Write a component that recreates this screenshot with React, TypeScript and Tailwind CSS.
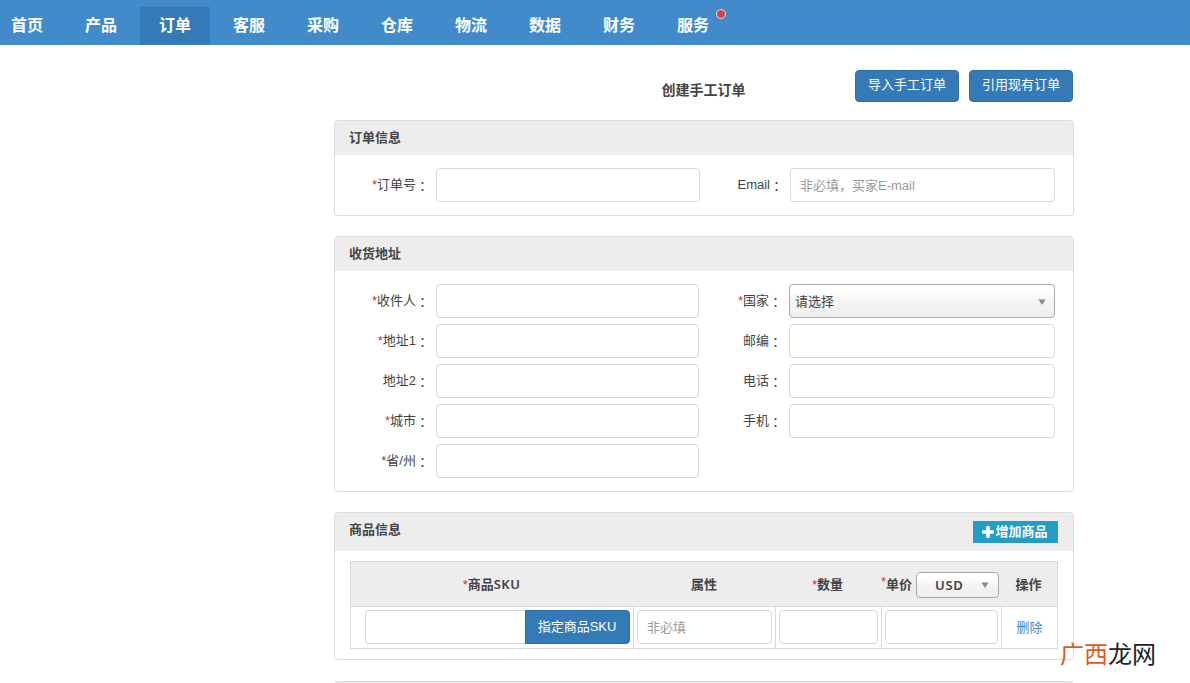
import { ReactNode } from "react";

const NAV = ["首页", "产品", "订单", "客服", "采购", "仓库", "物流", "数据", "财务", "服务"];

function Star({ className = "" }: { className?: string }) {
  return <span className={`font-['Liberation_Sans',sans-serif] font-normal text-[#c9302c] ${className}`}>*</span>;
}

function Label({ text, required = false, className = "" }: { text: string; required?: boolean; className?: string }) {
  return (
    <label className={`flex shrink-0 justify-end whitespace-nowrap pt-px ${className}`}>
      {required && <Star />}
      {text}
      <span className="pt-px font-['Noto_Sans_CJK_TC',sans-serif]">：</span>
    </label>
  );
}

function Field({ className = "", placeholder }: { className?: string; placeholder?: string }) {
  return (
    <input
      placeholder={placeholder}
      className={`h-[34px] min-w-0 rounded border border-[#d9d9d9] bg-white px-[9px] placeholder:text-[#999] ${className}`}
    />
  );
}

function Caret() {
  return (
    <svg viewBox="0 0 8 6" className="mt-px h-[6px] w-2" fill="#888">
      <path d="M0.5 0.5h7L4 6z" />
    </svg>
  );
}

function Panel({ title, action, headClass, className, children }: { title: string; action?: ReactNode; headClass: string; className: string; children: ReactNode }) {
  return (
    <section className={`overflow-hidden rounded border border-[#dcdcdc] bg-white ${className}`}>
      <header className={`flex justify-between bg-[#ededed] pl-[14px] pr-[15px] ${headClass}`}>
        <h2 className="pt-[7px] font-bold leading-5">{title}</h2>
        {action}
      </header>
      {children}
    </section>
  );
}

const LEFT = [
  { text: "收件人", required: true },
  { text: "地址1", required: true },
  { text: "地址2", required: false },
  { text: "城市", required: true },
  { text: "省/州", required: true },
];

const RIGHT = ["邮编", "电话", "手机"];

export default function App() {
  return (
    <div className="relative h-[683px] w-[1190px] overflow-hidden bg-white font-['Liberation_Sans','Noto_Sans_CJK_SC',sans-serif] text-[13px] leading-5 text-[#444]">
      <nav className="flex h-[45px] items-end gap-1 overflow-hidden bg-[#428bca]">
        {NAV.map((n, i) => (
          <a
            key={n}
            className={`relative flex h-[38px] w-[70px] shrink-0 items-center justify-center text-base font-bold text-white ${i === 0 ? "-ml-2" : ""} ${i === 2 ? "bg-[#347ab6]" : ""}`}
          >
            {n}
            {n === "服务" && (
              <span className="absolute right-[2px] top-[2px] size-[10px] rounded-full border border-[#f3d5dc] bg-[#dd4237]" />
            )}
          </a>
        ))}
      </nav>

      <main className="ml-[334px] w-[740px]">
        <div className="grid h-[75px] grid-cols-[1fr_auto_1fr] items-start pt-[25px]">
          <h1 className="col-start-2 pr-px pt-[10px] text-sm font-bold leading-5">创建手工订单</h1>
          <div className="flex justify-end gap-[10px] pr-px">
            {["导入手工订单", "引用现有订单"].map((t) => (
              <button key={t} className="h-8 w-[104px] rounded border border-[#2e6da4] bg-[#337ab7] pb-[2px] leading-5 text-white">
                {t}
              </button>
            ))}
          </div>
        </div>

        <Panel title="订单信息" headClass="h-[34px]" className="h-24">
          <div className="flex items-center pr-[18px] pt-[13px]">
            <Label text="订单号" required className="w-[94px]" />
            <Field className="ml-[7px] w-[264px]" />
            <Label text="Email" className="ml-auto" />
            <Field className="ml-[7px] w-[265px]" placeholder="非必填，买家E-mail" />
          </div>
        </Panel>

        <Panel title="收货地址" headClass="h-[34px]" className="mt-5 h-64">
          <div className="flex justify-between pr-[18px] pt-[13px]">
            <div className="flex flex-col gap-[6px]">
              {LEFT.map((f) => (
                <div key={f.text} className="flex items-center">
                  <Label text={f.text} required={f.required} className="w-[94px]" />
                  <Field className="ml-[7px] w-[263px]" />
                </div>
              ))}
            </div>
            <div className="flex flex-col gap-[6px]">
              <div className="flex items-center justify-end">
                <Label text="国家" required />
                <button className="ml-[7px] flex h-[34px] w-[266px] items-center justify-between rounded border border-[#aaa] bg-linear-to-b from-white from-20% via-[#f4f4f4] via-50% to-[#eee] pl-[5px] pr-2">
                  <span className="pt-px">请选择</span>
                  <Caret />
                </button>
              </div>
              {RIGHT.map((t) => (
                <div key={t} className="flex items-center justify-end">
                  <Label text={t} />
                  <Field className="ml-[7px] w-[266px]" />
                </div>
              ))}
            </div>
          </div>
        </Panel>

        <Panel
          title="商品信息"
          headClass="h-[38px]"
          className="mt-5 h-[148px]"
          action={
            <button className="mt-2 flex h-[22px] w-[85px] items-center justify-center bg-[#219dc6] pr-px font-bold text-white">
              <svg viewBox="0 0 12 12" className="size-3 shrink-0" fill="currentColor">
                <path d="M4.2 0.8Q4.2 0 5 0h2q.8 0 .8.8v3.4h3.4q.8 0 .8.8v2q0 .8-.8.8H7.8v3.4q0 .8-.8.8H5q-.8 0-.8-.8V7.8H.8Q0 7.8 0 7V5q0-.8.8-.8h3.4z" />
              </svg>
              <span className="ml-px whitespace-nowrap">增加商品</span>
            </button>
          }
        >
          <div className="ml-[15px] mt-[10px] w-[708px] border border-[#d9d9d9]">
            <div className="grid h-[45px] grid-cols-[282px_142px_106px_120px_56px] items-center border-b border-[#d9d9d9] bg-[#ededed] text-center font-['Noto_Sans','Noto_Sans_CJK_SC',sans-serif] font-semibold">
              <span className="pr-px"><Star />商品<span className="tracking-[0.4px]">SKU</span></span>
              <span>属性</span>
              <span className="pr-px"><Star />数量</span>
              <div className="flex items-center whitespace-nowrap">
                <Star className="-mt-1" />
                <span>单价</span>
                <button className="ml-1 mt-[2px] flex h-[26px] w-[83px] shrink-0 items-center justify-between rounded border border-[#aaa] bg-linear-to-b from-white from-20% via-[#f4f4f4] via-50% to-[#eee] pb-px pl-[18px] pr-[9px] tracking-[0.6px]">
                  USD
                  <Caret />
                </button>
              </div>
              <span className="pr-px">操作</span>
            </div>
            <div className="grid h-[41px] grid-cols-[283px_142px_106px_120px_1fr] divide-x divide-[#d9d9d9]">
              <div className="flex items-start pl-[14px] pt-[3px]">
                <Field className="w-40 rounded-r-none border-r-0" />
                <button className="h-[34px] w-[105px] rounded-r border border-[#2e6da4] bg-[#337ab7] pb-px pr-px text-white">指定商品SKU</button>
              </div>
              <div className="flex items-start pl-[3px] pt-[3px]">
                <Field className="w-[135px]" placeholder="非必填" />
              </div>
              <div className="flex items-start pl-[3px] pt-[3px]">
                <Field className="w-[99px]" />
              </div>
              <div className="flex items-start pl-[3px] pt-[3px]">
                <Field className="w-[113px]" />
              </div>
              <a className="flex items-center justify-center pt-px text-[#4d7fbd]">删除</a>
            </div>
          </div>
        </Panel>

        <div className="mt-[21px] h-8 rounded border border-[#dcdcdc] bg-[#ededed]" />
      </main>

      <div className="absolute left-[1060px] top-[638px] whitespace-nowrap font-['Noto_Sans_CJK_SC',sans-serif] text-2xl leading-[30px] text-[#222]">
        <span className="text-[#e4581c]">广西</span>龙网
      </div>
    </div>
  );
}
